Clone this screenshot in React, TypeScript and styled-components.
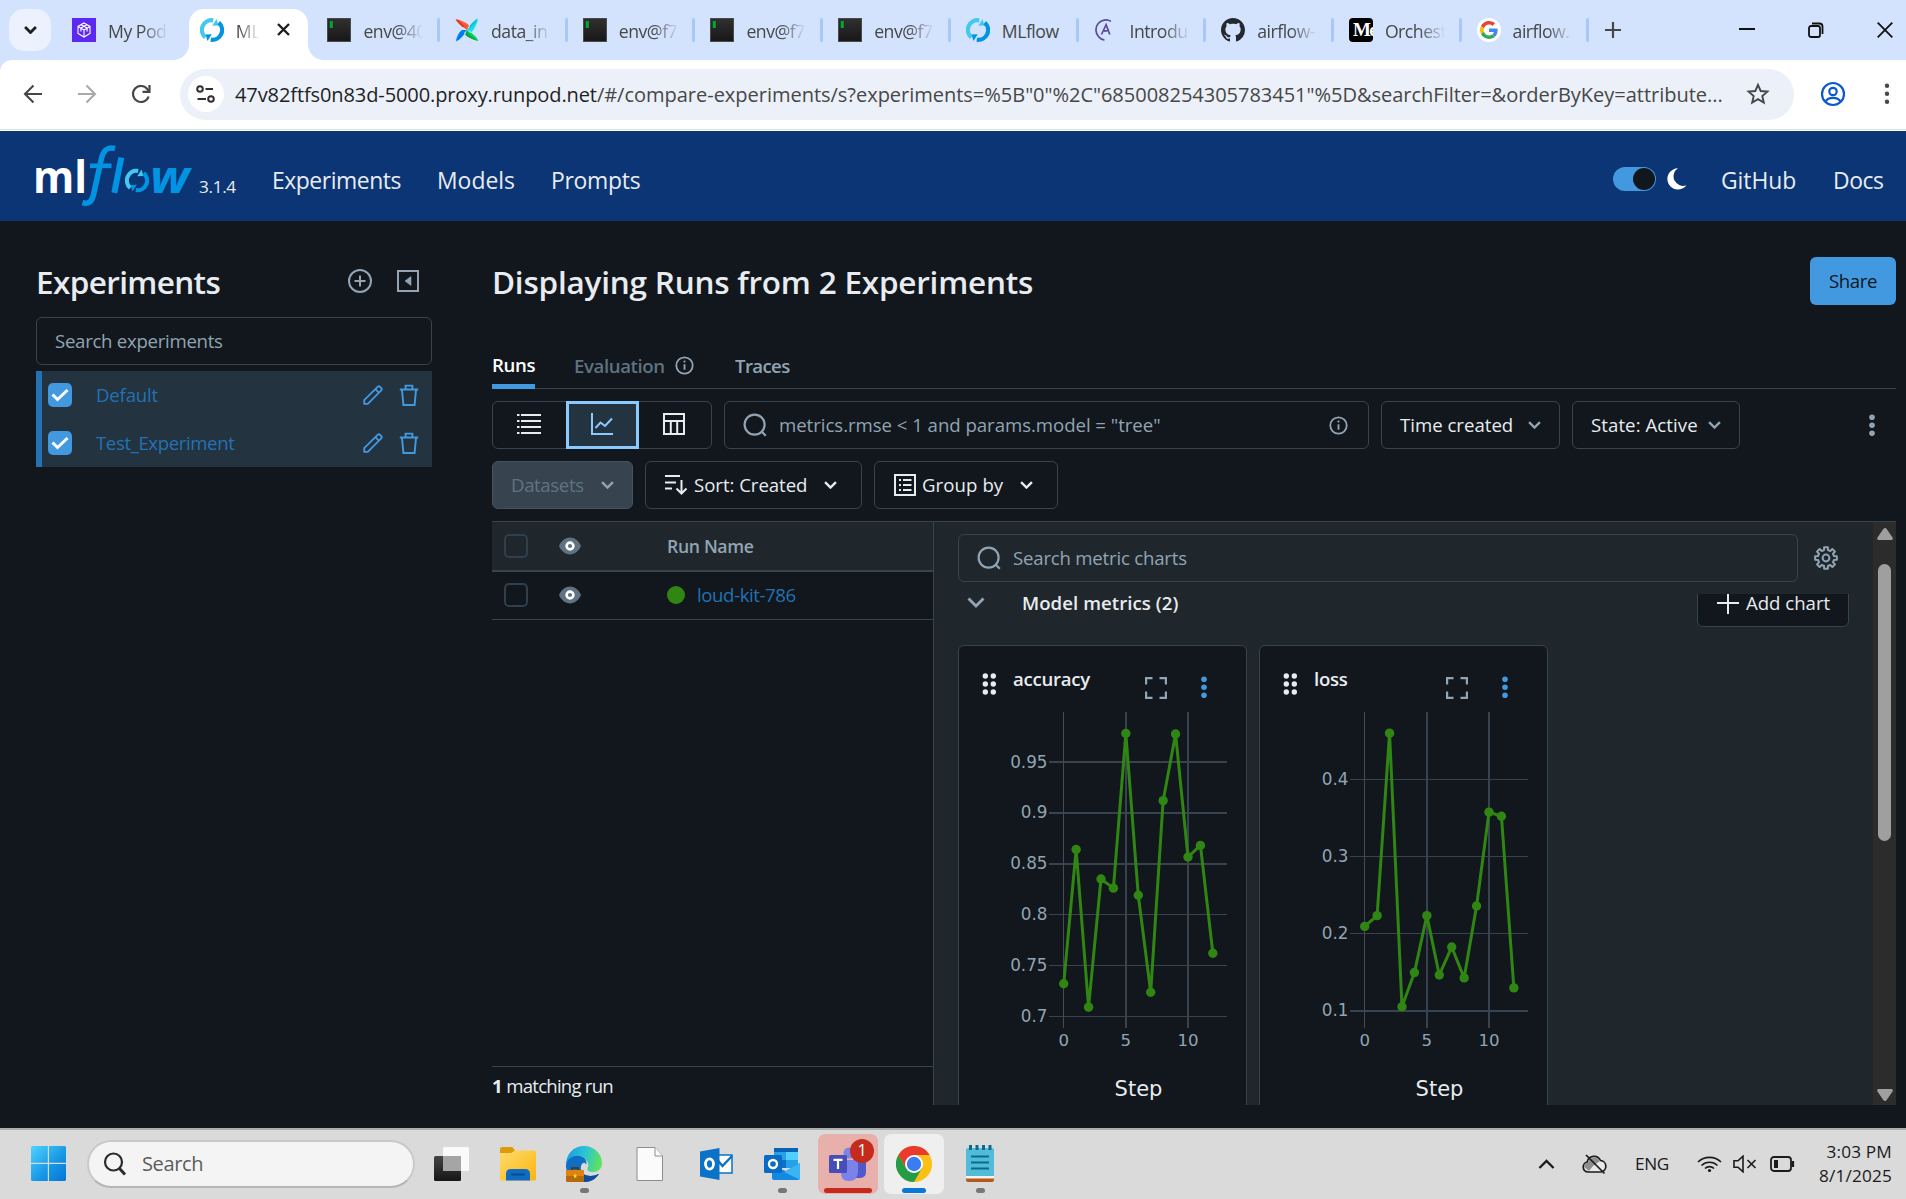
import React from "react";
import styled, { createGlobalStyle, css } from "styled-components";

const c = {
  bg: "#11171c",
  panel: "#1f272d",
  border: "#37444f",
  text: "#e8ecf0",
  muted: "#92a4b3",
  dim: "#5f7281",
  blue: "#4299e0",
  link: "#2272b4",
  nav: "#0b3574",
  green: "#308613",
};

const Global = createGlobalStyle`
  * { box-sizing: border-box; }
  body { margin: 0; background: ${c.bg}; font-family: "Open Sans", "Noto Sans", sans-serif; overflow: hidden; }
  svg { display: block; flex: none; }
`;

const Txt = styled.span<{ $s?: number; $w?: number; $c?: string; $ls?: number }>`
  font-size: ${(p) => (p.$s ?? 19.5) * 0.955}px;
  font-weight: ${(p) => p.$w ?? 400};
  color: ${(p) => p.$c ?? c.text};
  letter-spacing: ${(p) => p.$ls ?? -0.02}em;
  line-height: 1.3;
  padding-top: ${(p) => ((p.$s ?? 0) > 30 ? 0.1 : 0.06)}em;
  white-space: pre;
`;

const Screen = styled.div`
  width: 1906px;
  height: 1199px;
  display: flex;
  flex-direction: column;
  overflow: hidden;
  background: ${c.bg};
`;

/* ---------- browser chrome ---------- */
const TabStrip = styled.div`
  height: 60px;
  flex: none;
  display: flex;
  align-items: center;
  background: #d3e3fd;
  padding-left: 9px;
`;
const TabSearch = styled.div`
  width: 42px;
  height: 42px;
  margin-right: 4px;
  border-radius: 15px;
  background: #ebf2fe;
  display: grid;
  place-items: center;
`;
const Tab = styled.div<{ $active?: boolean; $sep?: boolean }>`
  width: 127.7px;
  height: 60px;
  flex: none;
  display: flex;
  align-items: center;
  padding-left: 17px;
  position: relative;
  z-index: ${(p) => (p.$active ? 1 : 0)};
  ${(p) =>
    p.$sep &&
    css`
      &::after {
        content: "";
        width: 3px;
        height: 24px;
        margin-left: auto;
        margin-right: -2px;
        border-radius: 2px;
        background: #a8c7fa;
      }
    `}
`;
const ActiveShape = styled.div`
  position: absolute;
  left: 6px;
  right: 2px;
  top: 9px;
  bottom: 0;
  background: #fff;
  border-radius: 15px 15px 0 0;
  &::before,
  &::after {
    content: "";
    position: absolute;
    bottom: 0;
    width: 15px;
    height: 15px;
  }
  &::before {
    left: -15px;
    background: radial-gradient(circle at 0 0, transparent 14.5px, #fff 15px);
  }
  &::after {
    right: -15px;
    background: radial-gradient(circle at 100% 0, transparent 14.5px, #fff 15px);
  }
`;
const TabBody = styled.div`
  display: flex;
  align-items: center;
  gap: 12px;
  position: relative;
`;
const TabTitle = styled.div<{ $width: number; $fade: boolean }>`
  width: ${(p) => p.$width}px;
  overflow: hidden;
  display: flex;
  padding-top: 2px;
  ${(p) =>
    p.$fade &&
    css`
      mask-image: linear-gradient(90deg, #000 calc(100% - 26px), transparent);
    `}
`;
const CloseBtn = styled.div`
  margin-left: 5px;
`;
const NewTab = styled.div`
  margin-left: 18px;
`;
const WindowControls = styled.div`
  margin-left: auto;
  margin-right: 13px;
  display: flex;
  align-items: center;
  gap: 53px;
`;
const AddressBar = styled.div`
  height: 71px;
  flex: none;
  background: #fff;
  border-bottom: 1px solid #fff;
  box-shadow: inset 0 -1px 0 #d7e3e0;
  border-top-left-radius: 12px;
  display: flex;
  align-items: center;
  padding: 0 0 2px 20px;
`;
const AddressWrap = styled.div`
  background: #d3e3fd;
`;
const NavIcons = styled.div`
  display: flex;
  gap: 28px;
  width: 160px;
`;
const Omnibox = styled.div`
  width: 1614px;
  height: 51px;
  border-radius: 26px;
  background: #ebf0f9;
  display: flex;
  align-items: center;
  padding: 0 24px 0 8px;
`;
const SiteInfo = styled.div`
  width: 36px;
  height: 36px;
  border-radius: 50%;
  background: #fff;
  margin-right: 11px;
  display: grid;
  place-items: center;
`;
const Push = styled.div`
  margin-left: auto;
  display: flex;
  align-items: center;
`;
const ChromeRight = styled.div`
  display: flex;
  align-items: center;
  gap: 37px;
  margin-left: 26px;
`;

/* ---------- mlflow header ---------- */
const Header = styled.div`
  height: 90px;
  flex: none;
  background: ${c.nav};
  display: flex;
  align-items: center;
  padding: 8px 22px 0 34px;
`;
const LogoBox = styled.div`
  margin-top: -9px;
`;
const Version = styled.div`
  display: flex;
  width: 78px;
  padding: 14px 0 0 5px;
`;
const NavLink = styled.div<{ $width: number }>`
  width: ${(p) => p.$width}px;
  display: flex;
`;
const Toggle = styled.div`
  width: 43px;
  height: 24px;
  border-radius: 12px;
  background: ${c.blue};
  display: flex;
  justify-content: flex-end;
  padding: 1px;
  margin: -2px 11px 0 0;
`;
const Knob = styled.div`
  width: 22px;
  height: 22px;
  border-radius: 50%;
  background: ${c.bg};
`;
const MoonBox = styled.div`
  margin: -2px 34px 0 0;
`;

/* ---------- page ---------- */
const Page = styled.div`
  height: 907px;
  flex: none;
  display: flex;
  padding: 36px 10px 23px 36px;
`;
const Sidebar = styled.div`
  width: 396px;
  margin-right: 60px;
  flex: none;
`;
const TitleRow = styled.div`
  height: 48px;
  display: flex;
  align-items: center;
  justify-content: space-between;
`;
const SideIcons = styled.div`
  display: flex;
  gap: 24px;
  padding-right: 12px;
`;
const Field = styled.div<{ $width: number; $pad?: number; $mt?: number }>`
  width: ${(p) => p.$width}px;
  height: 48px;
  flex: none;
  margin-top: ${(p) => p.$mt ?? 0}px;
  border: 1px solid ${c.border};
  border-radius: 6px;
  display: flex;
  align-items: center;
  gap: 12px;
  padding: 0 20px 0 ${(p) => p.$pad ?? 18}px;
`;
const ExpList = styled.div`
  margin-top: 6px;
  border-left: 6px solid ${c.link};
  background: #243340;
`;
const ExpRow = styled.div`
  height: 48px;
  display: flex;
  align-items: center;
  padding: 0 13px 0 6px;
`;
const Checked = styled.div`
  width: 24px;
  height: 24px;
  border-radius: 5px;
  background: ${c.blue};
  margin-right: 24px;
  display: grid;
  place-items: center;
`;
const RowActions = styled.div`
  margin-left: auto;
  display: flex;
  align-items: center;
  gap: 16px;
`;
const Main = styled.div`
  width: 1404px;
  display: flex;
  flex-direction: column;
`;
const ShareBtn = styled.div`
  width: 86px;
  height: 48px;
  border-radius: 6px;
  background: ${c.blue};
  display: grid;
  place-items: center;
`;
const SubTabs = styled.div`
  height: 48px;
  margin-top: 36px;
  border-bottom: 1px solid ${c.border};
  display: flex;
`;
const SubTab = styled.div<{ $active?: boolean; $width: number; $mr: number }>`
  width: ${(p) => p.$width}px;
  margin-right: ${(p) => p.$mr}px;
  height: 48px;
  display: flex;
  align-items: center;
  gap: 10px;
  padding-top: ${(p) => (p.$active ? 5 : 1)}px;
  border-bottom: ${(p) => (p.$active ? `5px solid ${c.blue}` : "none")};
`;
const Tools = styled.div`
  display: flex;
  gap: 12px;
  margin-top: 12px;
  height: 48px;
  flex: none;
`;
const Segments = styled.div`
  width: 220px;
  border: 1px solid ${c.border};
  border-radius: 6px;
  display: grid;
  grid-template-columns: 73px 73px 72px;
`;
const Segment = styled.div<{ $active?: boolean }>`
  display: grid;
  place-items: center;
  padding: 0 2px 3px 0;
  ${(p) =>
    p.$active &&
    css`
      margin: -1px 0;
      background: #243340;
      border: 3px solid #8acaff;
    `}
`;
const Btn = styled.div<{ $width: number; $disabled?: boolean; $pr?: number }>`
  width: ${(p) => p.$width}px;
  border: 1px solid ${(p) => (p.$disabled ? "#44535f" : c.border)};
  background: ${(p) => (p.$disabled ? c.border : "transparent")};
  border-radius: 6px;
  display: flex;
  align-items: center;
  padding: 0 ${(p) => p.$pr ?? 18}px 0 18px;
`;
const BtnIcon = styled.div`
  margin: 0 5px 0 1px;
`;
const Overflow = styled.div`
  margin-left: auto;
  padding-right: 20px;
  display: flex;
  align-items: center;
`;

/* ---------- runs table ---------- */
const Split = styled.div`
  display: flex;
  margin-top: 12px;
  height: 584px;
  border-top: 1px solid ${c.border};
`;
const RunsCol = styled.div`
  width: 441px;
  flex: none;
  display: flex;
  flex-direction: column;
`;
const TRow = styled.div<{ $head?: boolean }>`
  height: ${(p) => (p.$head ? 50 : 48)}px;
  background: ${(p) => (p.$head ? c.panel : "transparent")};
  border-bottom: ${(p) => (p.$head ? 2 : 1)}px solid ${c.border};
  display: flex;
  align-items: center;
  padding: 0 0 ${(p) => (p.$head ? 0 : 1)}px 12px;
`;
const Box = styled.div`
  width: 24px;
  height: 24px;
  border: 2px solid #2f3f4d;
  border-radius: 5px;
  margin-right: 31px;
`;
const EyeCell = styled.div`
  width: 109px;
`;
const Dot = styled.div`
  width: 18px;
  height: 18px;
  border-radius: 50%;
  background: ${c.green};
  margin-right: 12px;
`;
const RunCell = styled.div`
  display: flex;
  align-items: center;
  margin-left: -1px;
`;
const Footer = styled.div`
  margin-top: auto;
  height: 39px;
  border-top: 1px solid ${c.border};
  display: flex;
  align-items: center;
`;

/* ---------- charts ---------- */
const ChartsCol = styled.div`
  width: 940px;
  flex: none;
  border-left: 1px solid ${c.border};
  background: ${c.panel};
  padding: 12px 24px 0 24px;
  display: flex;
  flex-direction: column;
`;
const SearchRow = styled.div`
  display: flex;
  align-items: center;
  gap: 16px;
  margin-bottom: 12px;
`;
const Scroller = styled.div`
  flex: 1;
  min-height: 0;
  overflow: hidden;
`;
const Section = styled.div`
  margin-top: -15px;
  height: 48px;
  display: flex;
  align-items: center;
  padding-left: 9px;
`;
const SectionTitle = styled.div`
  margin-left: 37px;
  display: flex;
`;
const AddBtn = styled.div`
  margin-left: auto;
  width: 152px;
  height: 48px;
  background: ${c.bg};
  border: 1px solid ${c.border};
  border-radius: 6px;
  display: flex;
  align-items: center;
  gap: 7px;
  padding: 0 0 0 19px;
`;
const Cards = styled.div`
  display: flex;
  gap: 12px;
  margin-top: 18px;
`;
const Card = styled.div`
  width: 289px;
  height: 520px;
  flex: none;
  background: ${c.bg};
  border: 1px solid ${c.border};
  border-radius: 6px;
`;
const CardHead = styled.div`
  height: 56px;
  display: flex;
  align-items: center;
  padding: 20px 38px 0 23px;
`;
const CardTitle = styled.div`
  margin: -10px 0 0 16px;
  display: flex;
`;
const CardIcons = styled.div`
  margin-left: auto;
  display: flex;
  gap: 33px;
  padding-top: 7px;
  align-items: center;
`;
const Track = styled.div`
  width: 23px;
  flex: none;
  background: #2c2c2c;
  display: flex;
  flex-direction: column;
  align-items: center;
  padding: 6px 0 4px;
`;
const Thumb = styled.div`
  width: 13px;
  height: 277px;
  margin: 24px 0 auto;
  border-radius: 7px;
  background: #9f9f9f;
`;

/* ---------- taskbar ---------- */
const Taskbar = styled.div`
  height: 71px;
  flex: none;
  background: #dadada;
  border-top: 2px solid #adadad;
  display: flex;
  align-items: center;
  padding: 0 14px 2px 31px;
`;
const TaskSearch = styled.div`
  width: 328px;
  height: 48px;
  margin: 0 7px 0 21px;
  border-radius: 24px;
  border: 2px solid #c9c9c9;
  border-bottom-color: #b5b5b5;
  background: #f4f4f4;
  display: flex;
  align-items: center;
  gap: 15px;
  padding-left: 14px;
`;
const Slot = styled.div<{ $bg?: string }>`
  width: 60px;
  height: 60px;
  margin-right: 6px;
  flex: none;
  border-radius: 7px;
  background: ${(p) => p.$bg ?? "transparent"};
  display: grid;
  place-items: center;
  position: relative;
`;
const Indicator = styled.div<{ $width: number; $color: string }>`
  position: absolute;
  bottom: 1px;
  left: calc(50% - ${(p) => p.$width / 2}px);
  width: ${(p) => p.$width}px;
  height: 5px;
  border-radius: 3px;
  background: ${(p) => p.$color};
`;
const Badge = styled.div`
  position: absolute;
  right: 4px;
  top: 5px;
  width: 24px;
  height: 24px;
  border-radius: 50%;
  background: #c42b1c;
  display: grid;
  place-items: center;
`;
const Tray = styled.div`
  margin-left: auto;
  display: flex;
  align-items: center;
`;
const TrayItem = styled.div<{ $mr: number }>`
  margin-right: ${(p) => p.$mr}px;
  display: flex;
`;
const Clock = styled.div`
  width: 83px;
  display: flex;
  flex-direction: column;
  align-items: flex-end;
`;

/* ---------- icons ---------- */
const Chevron = ({ size = 12, color = c.text, sw = 2.2, up = false }: { size?: number; color?: string; sw?: number; up?: boolean }) => (
  <svg width={size} height={size * 0.67} viewBox="0 0 12 8" fill="none" stroke={color} strokeWidth={sw}>
    <path d={up ? "M1 7l5-5 5 5" : "M1 1l5 5 5-5"} />
  </svg>
);
const Dots = ({ color, r = 2.5, gap = 8 }: { color: string; r?: number; gap?: number }) => (
  <svg width="8" height={gap * 2 + r * 2 + 1} viewBox={`0 0 8 ${gap * 2 + r * 2 + 1}`} fill={color}>
    {[0, 1, 2].map((i) => (
      <circle key={i} cx="4" cy={r + 0.5 + i * gap} r={r} />
    ))}
  </svg>
);
const Magnifier = ({ size = 24, color = c.muted }: { size?: number; color?: string }) => (
  <svg width={size} height={size} viewBox="0 0 24 24" fill="none" stroke={color} strokeWidth="2.2">
    <circle cx="11.6" cy="11.6" r="10" />
    <path d="M18.5 18.5l4.3 4.3" />
  </svg>
);
const Info = () => (
  <svg width="19" height="19" viewBox="0 0 19 19">
    <circle cx="9.5" cy="9.5" r="8.2" fill="none" stroke={c.muted} strokeWidth="1.8" />
    <circle cx="9.5" cy="5.6" r="1.1" fill={c.muted} />
    <path d="M9.5 8.3v5.4" stroke={c.muted} strokeWidth="1.9" />
  </svg>
);
const MlflowMark = ({ size = 24 }: { size?: number }) => (
  <svg width={size} height={size} viewBox="0 0 24 24" fill="none" strokeWidth="4.2">
    <path d="M5.300 19.400A9.800 9.800 0 0 1 13.200 2.300" stroke="#43c9ed" />
    <path d="M12.200 7.700L18.400 7.500 16.600.9z" fill="#43c9ed" />
    <path d="M18.700 4.600A9.800 9.800 0 0 1 10.800 21.700" stroke="#0194e2" />
    <path d="M11.800 16.300L5.600 16.500 7.400 23.100z" fill="#0194e2" />
  </svg>
);
const Terminal = () => (
  <svg width="24" height="24" viewBox="0 0 24 24">
    <defs>
      <linearGradient id="term" x1="0" y1="0" x2="0" y2="1">
        <stop offset="0" stopColor="#303030" />
        <stop offset="1" stopColor="#171717" />
      </linearGradient>
    </defs>
    <rect x="0.5" y="0.5" width="23" height="23" fill="url(#term)" stroke="#4a4a4a" />
    <rect x="2.8" y="3" width="3" height="7" fill="#00a832" />
  </svg>
);
const RunpodIcon = () => (
  <svg width="24" height="24" viewBox="0 0 24 24" fill="none" stroke="#fff" strokeWidth="1.1">
    <rect width="24" height="24" fill="#5d29f0" stroke="none" />
    <path d="M12 5l6 3.400v7L12 19l-6-3.600v-7zM6 8.400l6 3.500 6-3.500M12 12v7M8.900 10l6-3.300M15.100 10l-6-3.300M8.900 13.500v-3.400M15.100 13.500v-3.400" />
  </svg>
);
const Airflow = () => (
  <svg width="24" height="24" viewBox="0 0 24 24">
    <path d="M.5 1.300C6 1.800 9.500 5 12 12 9.600 10 9 8.500 8 9.500 5 7 2 4.500.5 1.300z" fill="#e43921" />
    <path d="M1 1C7 3 11 4 14 7.500L12 12C9 7 6 4 1 1z" fill="#ff5a36" />
    <path d="M22.700.5C22.200 6 19 9.500 12 12c2-2.400 3.500-3 2.500-4C17 5 19.500 2 22.700.5z" fill="#00c7d4" />
    <path d="M23 1C21 7 20 11 16.500 14L12 12C17 9 20 6 23 1z" fill="#11e1ee" />
    <path d="M23.500 22.700C18 22.200 14.500 19 12 12c2.400 2 3 3.500 4 2.500 3 2.500 6 5 7.500 8.200z" fill="#04d659" />
    <path d="M23 23C17 21 13 20 10 16.500L12 12c3 5 6 8 11 11z" fill="#00ad46" />
    <path d="M1.300 23.500C1.800 18 5 14.500 12 12c-2 2.400-3.500 3-2.500 4C7 19 4.500 22 1.300 23.500z" fill="#017cee" />
    <path d="M1 23C2.500 17 4 14 7.200 12L12 12C7 14 4 18 1 23z" fill="#017cee" />
  </svg>
);
const Astronomer = () => (
  <svg width="24" height="24" viewBox="0 0 24 24" fill="none" stroke="#5c4a9c" strokeWidth="1.7">
    <path d="M17 3.400A9.900 9.900 0 0 0 4.500 18.500Q7 21.800 10.500 22" />
    <path d="M7.500 16.500l4.600-9.800 3.700 9.800M9.800 13.200l5.200-.8" />
  </svg>
);
const GitHubIcon = () => (
  <svg width="24" height="24" viewBox="0 0 16 16" fill="#24292f">
    <path d="M8 0C3.580 0 0 3.580 0 8c0 3.540 2.290 6.530 5.470 7.590.4.070.550-.170.550-.380 0-.190-.010-.820-.010-1.490-2.010.370-2.530-.490-2.690-.940-.090-.230-.480-.940-.820-1.130-.280-.150-.680-.520-.010-.530.630-.010 1.080.580 1.230.820.720 1.210 1.870.870 2.330.660.070-.520.280-.870.510-1.070-1.780-.200-3.640-.890-3.640-3.950 0-.870.310-1.590.820-2.150-.080-.200-.360-1.020.080-2.120 0 0 .670-.210 2.200.820.640-.180 1.320-.270 2-.270s1.360.090 2 .270c1.530-1.040 2.200-.820 2.200-.820.440 1.100.160 1.920.080 2.120.510.560.820 1.270.820 2.150 0 3.070-1.870 3.750-3.650 3.950.290.250.540.730.540 1.480 0 1.070-.010 1.930-.010 2.200 0 .210.150.460.550.380A8 8 0 0 0 16 8c0-4.420-3.580-8-8-8z" />
  </svg>
);
const MediumBox = styled.div`
  width: 24px;
  height: 24px;
  border-radius: 4px;
  background: #000;
  color: #fff;
  overflow: hidden;
  white-space: nowrap;
  padding-left: 4px;
  font: bold 19px/23px "Liberation Serif", serif;
  letter-spacing: -1.5px;
`;
const GoogleG = () => (
  <svg width="24" height="24" viewBox="0 0 24 24">
    <circle cx="12" cy="12" r="12" fill="#fff" />
    <g transform="translate(3 3) scale(.375)">
      <path fill="#EA4335" d="M24 9.500c3.540 0 6.710 1.220 9.210 3.600l6.850-6.850C35.900 2.380 30.470 0 24 0 14.620 0 6.510 5.380 2.560 13.220l7.980 6.190C12.430 13.720 17.740 9.500 24 9.500z" />
      <path fill="#4285F4" d="M46.980 24.550c0-1.570-.15-3.090-.38-4.550H24v9.020h12.940c-.58 2.960-2.260 5.480-4.780 7.180l7.730 6c4.510-4.180 7.090-10.360 7.090-17.650z" />
      <path fill="#FBBC05" d="M10.530 28.590c-.48-1.450-.76-2.990-.76-4.590s.27-3.140.76-4.590l-7.980-6.190C.92 16.460 0 20.120 0 24c0 3.880.92 7.540 2.560 10.780l7.970-6.190z" />
      <path fill="#34A853" d="M24 48c6.480 0 11.930-2.130 15.890-5.810l-7.730-6c-2.150 1.450-4.920 2.300-8.160 2.300-6.260 0-11.570-4.220-13.470-9.910l-7.980 6.190C6.510 42.620 14.620 48 24 48z" />
    </g>
  </svg>
);

const Logo = () => (
  <svg width="160" height="64" viewBox="34 144 160 64">
    <text x="33" y="192.500" fontFamily="Open Sans" fontWeight="700" fontSize="45" fill="#fff" textLength="54" lengthAdjust="spacingAndGlyphs">
      ml
    </text>
    <path d="M115 148.500c-8-2-12 2-14 12l-7 32c-1.600 8.500-4.500 12-11.500 10.300" fill="none" stroke="#0194e2" strokeWidth="5.600" />
    <path d="M90 165.800h21.500" stroke="#0194e2" strokeWidth="4.600" />
    <path d="M121.300 157.500l-7 35.300" stroke="#0194e2" strokeWidth="6" />
    <g transform="translate(125 168.500)">
      <MlflowMark size={24} />
    </g>
    <text x="150" y="192.700" fontFamily="Open Sans" fontStyle="italic" fontWeight="700" fontSize="44" fill="#0194e2" textLength="39.500" lengthAdjust="spacingAndGlyphs">
      w
    </text>
  </svg>
);
const Pencil = () => (
  <svg width="20" height="20" viewBox="0 0 20 20" fill="none" stroke={c.blue} strokeWidth="1.800" strokeLinejoin="round">
    <path d="M1.200 18.800v-3.600L14.600 1.800a1.700 1.700 0 0 1 2.400 0l1.200 1.200a1.700 1.700 0 0 1 0 2.400L4.800 18.800zM12.300 4.200l3.500 3.500" />
  </svg>
);
const Trash = () => (
  <svg width="20" height="22" viewBox="0 0 20 22" fill="none" stroke={c.blue} strokeWidth="1.900">
    <path d="M.8 5.500h18.400M6.600 5V1.600h6.800V5M3 5.800l1.400 15.200h11.200L17 5.800" />
  </svg>
);
const Eye = () => (
  <svg width="22" height="18" viewBox="0 0 22 18">
    <path d="M0 9C2.500 3.500 6.500.6 11 .6S19.500 3.500 22 9c-2.500 5.500-6.500 8.400-11 8.400S2.500 14.500 0 9z" fill={c.dim} />
    <circle cx="11" cy="9" r="3.400" fill="none" stroke="#fff" strokeWidth="2.600" />
  </svg>
);
const Gear = () => (
  <svg width="24" height="24" viewBox="0 0 24 24" fill="none" stroke={c.muted} strokeWidth="2">
    <path
      strokeLinejoin="round"
      d={(() => {
        const pts: string[] = [];
        for (let i = 0; i < 8; i++) {
          const a = (i * Math.PI) / 4 - Math.PI / 2;
          [
            [-0.24, 8.2],
            [-0.17, 11],
            [0.17, 11],
            [0.24, 8.2],
          ].forEach(([o, r]) => pts.push(`${(12 + r * Math.cos(a + o)).toFixed(2)} ${(12 + r * Math.sin(a + o)).toFixed(2)}`));
        }
        return "M" + pts.join("L") + "Z";
      })()}
    />
    <circle cx="12" cy="12" r="3.400" />
  </svg>
);
const Fullscreen = () => (
  <svg width="22" height="22" viewBox="0 0 22 22" fill="none" stroke={c.muted} strokeWidth="2.200">
    <path d="M1.100 7.500V1.100h6.400M14.500 1.100h6.400v6.400M20.900 14.500v6.400h-6.400M7.500 20.900H1.100v-6.400" />
  </svg>
);
const DragHandle = () => (
  <svg width="15" height="22" viewBox="0 0 15 22" fill={c.text}>
    {[3, 11, 19].map((y) => (
      <g key={y}>
        <circle cx="3.300" cy={y} r="2.700" />
        <circle cx="11.300" cy={y} r="2.700" />
      </g>
    ))}
  </svg>
);

type ChartProps = { title: string; values: number[]; ticks: { v: number; w: number }[]; y: (v: number) => number };
const PLOT = { x0: 104.7, step: 12.43, left: 90, right: 268, top: 10, bottom: 325.7 };
const ChartCard = ({ title, values, ticks, y }: ChartProps) => {
  const x = (i: number) => PLOT.x0 + i * PLOT.step;
  return (
    <Card>
      <CardHead>
        <DragHandle />
        <CardTitle>
          <Txt $w={600} $ls={-0.015}>{title}</Txt>
        </CardTitle>
        <CardIcons>
          <Fullscreen />
          <Dots color={c.blue} r={2.8} />
        </CardIcons>
      </CardHead>
      <svg width="287" height="440" viewBox="0 0 287 440" fontFamily="DejaVu Sans" fill={c.muted}>
        <g stroke={c.border} shapeRendering="crispEdges">
          {ticks.map((t) => (
            <line key={t.v} x1={PLOT.left} x2={PLOT.right} y1={y(t.v)} y2={y(t.v)} strokeWidth={t.w} />
          ))}
          <line x1={x(5)} x2={x(5)} y1={PLOT.top} y2={PLOT.bottom} strokeWidth="2" />
          <line x1={x(10)} x2={x(10)} y1={PLOT.top} y2={PLOT.bottom} strokeWidth="2" />
          <line x1={x(0)} x2={x(0)} y1={PLOT.top} y2={PLOT.bottom} strokeWidth="1" stroke="#444a50" />
        </g>
        {ticks.map((t) => (
          <text key={t.v} x={PLOT.left - 1.5} y={y(t.v) + 5.6} textAnchor="end" fontSize="16.800">
            {t.v}
          </text>
        ))}
        {[0, 5, 10].map((i) => (
          <text key={i} x={x(i)} y={344} textAnchor="middle" fontSize="16.600">
            {i}
          </text>
        ))}
        <text x="179.500" y="394" textAnchor="middle" fontSize="21" fill={c.text}>
          Step
        </text>
        <polyline points={values.map((v, i) => `${x(i)},${y(v)}`).join(" ")} fill="none" stroke={c.green} strokeWidth="3" strokeLinejoin="round" />
        {values.map((v, i) => (
          <circle key={i} cx={x(i)} cy={y(v)} r="4.700" fill={c.green} />
        ))}
      </svg>
    </Card>
  );
};

const accuracy = [0.732, 0.864, 0.709, 0.835, 0.826, 0.978, 0.819, 0.7237, 0.912, 0.9775, 0.8566, 0.868, 0.762];
const loss = [0.2095, 0.2234, 0.4601, 0.1052, 0.1496, 0.2234, 0.1465, 0.1827, 0.1427, 0.2359, 0.3576, 0.3524, 0.1297];

const TABS: { icon: React.ReactNode; title: string; sep: boolean; active?: boolean; whole?: boolean }[] = [
  { icon: <RunpodIcon />, title: "My Pod", sep: false },
  { icon: <MlflowMark />, title: "ML", sep: false, active: true },
  { icon: <Terminal />, title: "env@40", sep: true },
  { icon: <Airflow />, title: "data_in", sep: true },
  { icon: <Terminal />, title: "env@f7", sep: true },
  { icon: <Terminal />, title: "env@f7", sep: true },
  { icon: <Terminal />, title: "env@f7", sep: true },
  { icon: <MlflowMark />, title: "MLflow", sep: true, whole: true },
  { icon: <Astronomer />, title: "Introdu", sep: true },
  { icon: <GitHubIcon />, title: "airflow-", sep: true },
  { icon: <MediumBox>Me</MediumBox>, title: "Orchest", sep: true },
  { icon: <GoogleG />, title: "airflow.", sep: true },
];

export default function App() {
  return (
    <>
      <Global />
      <Screen>
        <TabStrip>
          <TabSearch>
            <Chevron size={13} color="#1f1f1f" sw={2.6} />
          </TabSearch>
          {TABS.map((t, i) => (
            <Tab key={i} $active={t.active} $sep={t.sep}>
              {t.active && <ActiveShape />}
              <TabBody>
                {t.icon}
                <TabTitle $width={t.active ? 24 : 60} $fade={!t.whole}>
                  <Txt $s={18.5} $ls={t.active ? 0 : -0.028} $c={t.active ? "#1f1f1f" : "#474747"}>{t.title}</Txt>
                </TabTitle>
                {t.active && (
                  <CloseBtn>
                    <svg width="13" height="13" viewBox="0 0 13 13" stroke="#1f1f1f" strokeWidth="2.400">
                      <path d="M1 1l11 11M12 1L1 12" />
                    </svg>
                  </CloseBtn>
                )}
              </TabBody>
            </Tab>
          ))}
          <NewTab>
            <svg width="16" height="16" viewBox="0 0 16 16" stroke="#474747" strokeWidth="2.200">
              <path d="M8 0v16M0 8h16" />
            </svg>
          </NewTab>
          <WindowControls>
            <svg width="16" height="16" viewBox="0 0 16 16" stroke="#111" strokeWidth="2">
              <path d="M0 7h16" />
            </svg>
            <svg width="16" height="16" viewBox="0 0 16 16" stroke="#111" strokeWidth="1.800" fill="none">
              <rect x="1" y="4" width="11" height="11" rx="2" />
              <path d="M4 1.500h7.500a3 3 0 0 1 3 3V12" />
            </svg>
            <svg width="16" height="16" viewBox="0 0 16 16" stroke="#111" strokeWidth="1.800">
              <path d="M.7.7l14.600 14.600M15.300.7L.7 15.300" />
            </svg>
          </WindowControls>
        </TabStrip>

        <AddressWrap>
          <AddressBar>
            <NavIcons>
              <svg width="26" height="24" viewBox="0 0 26 24" fill="none" stroke="#474747" strokeWidth="2.100">
                <path d="M22 12H5.500M13.500 3.500L5 12l8.500 8.500" />
              </svg>
              <svg width="26" height="24" viewBox="0 0 26 24" fill="none" stroke="#a9a9a9" strokeWidth="2.100">
                <path d="M4 12h16.500M12.500 3.500L21 12l-8.500 8.500" />
              </svg>
              <svg width="26" height="24" viewBox="0 0 26 24" fill="none" stroke="#474747" strokeWidth="2.200">
                <path d="M20.600 14.500A8 8 0 1 1 19.500 7.300l1.500 2" />
                <path d="M21.500 3v6.800h-7" />
              </svg>
            </NavIcons>
            <Omnibox>
              <SiteInfo>
                <svg width="20" height="18" viewBox="0 0 20 18" fill="none" stroke="#303030" strokeWidth="2">
                  <circle cx="4" cy="4" r="2.800" />
                  <path d="M9.500 4H17M1.500 14H10" />
                  <circle cx="15" cy="14" r="2.800" />
                </svg>
              </SiteInfo>
              <Txt $s={21} $ls={-0.006} $c="#1f1f1f">47v82ftfs0n83d-5000.proxy.runpod.net</Txt>
              <Txt $s={21} $ls={-0.002} $c="#474747">{'/#/compare-experiments/s?experiments=%5B"0"%2C"685008254305783451"%5D&searchFilter=&orderByKey=attribute...'}</Txt>
              <Push>
                <svg width="24" height="24" viewBox="0 0 24 24" fill="none" stroke="#474747" strokeWidth="1.900">
                  <path d="M12 2.800l2.700 6.200 6.700.6-5.100 4.400 1.500 6.600L12 17.100l-5.800 3.500 1.500-6.600L2.600 9.600 9.300 9z" />
                </svg>
              </Push>
            </Omnibox>
            <ChromeRight>
              <svg width="26" height="26" viewBox="0 0 26 26" fill="none" stroke="#0b57d0" strokeWidth="2.200">
                <circle cx="13" cy="13" r="11" />
                <circle cx="13" cy="10.500" r="3.700" />
                <path d="M5.500 20.500c1.500-2.700 4-3.700 7.500-3.700s6 1 7.500 3.700" />
              </svg>
              <Dots color="#474747" r={2.2} />
            </ChromeRight>
          </AddressBar>
        </AddressWrap>

        <Header>
          <LogoBox><Logo /></LogoBox>
          <Version>
            <Txt $s={18}>3.1.4</Txt>
          </Version>
          <NavLink $width={165}><Txt $s={24}>Experiments</Txt></NavLink>
          <NavLink $width={114}><Txt $s={24} $ls={0}>Models</Txt></NavLink>
          <NavLink $width={100}><Txt $s={24} $ls={-0.012}>Prompts</Txt></NavLink>
          <Push>
            <Toggle><Knob /></Toggle>
            <MoonBox>
              <svg width="20" height="22" viewBox="0 0 20 22" fill="#fff">
                <path d="M11 .3A10.600 10.600 0 1 0 19.500 17.200 9.500 9.500 0 0 1 11 .3z" />
              </svg>
            </MoonBox>
            <NavLink $width={112}><Txt $s={24} $ls={-0.002}>GitHub</Txt></NavLink>
            <NavLink $width={51}><Txt $s={24}>Docs</Txt></NavLink>
          </Push>
        </Header>

        <Page>
          <Sidebar>
            <TitleRow>
              <Txt $s={33} $w={600} $ls={-0.02}>Experiments</Txt>
              <SideIcons>
                <svg width="24" height="24" viewBox="0 0 24 24" fill="none" stroke={c.muted} strokeWidth="2">
                  <circle cx="12" cy="12" r="11" />
                  <path d="M12 6.500v11M6.500 12h11" />
                </svg>
                <svg width="24" height="24" viewBox="0 0 24 24" fill="none" stroke={c.muted} strokeWidth="2">
                  <rect x="2" y="2" width="20" height="20" />
                  <path d="M15 7.500v9L9 12z" fill={c.muted} stroke={c.muted} strokeWidth="0.600" />
                </svg>
              </SideIcons>
            </TitleRow>
            <Field $width={396} $mt={12}>
              <Txt $c={c.muted} $ls={-0.015}>Search experiments</Txt>
            </Field>
            <ExpList>
              {["Default", "Test_Experiment"].map((n) => (
                <ExpRow key={n}>
                  <Checked>
                    <svg width="18" height="14" viewBox="0 0 18 14" fill="none" stroke="#fff" strokeWidth="3">
                      <path d="M1.500 6.500l5 5L16.500 2" />
                    </svg>
                  </Checked>
                  <Txt $c={c.link} $ls={n === "Default" ? -0.01 : -0.021}>{n}</Txt>
                  <RowActions>
                    <Pencil />
                    <Trash />
                  </RowActions>
                </ExpRow>
              ))}
            </ExpList>
          </Sidebar>

          <Main>
            <TitleRow>
              <Txt $s={33} $w={600} $ls={-0.007}>Displaying Runs from 2 Experiments</Txt>
              <ShareBtn><Txt $c={c.bg}>Share</Txt></ShareBtn>
            </TitleRow>
            <SubTabs>
              <SubTab $active $width={43} $mr={39}><Txt $w={600} $c="#fff">Runs</Txt></SubTab>
              <SubTab $width={120} $mr={41}>
                <Txt $w={600} $c={c.dim} $ls={-0.021}>Evaluation</Txt>
                <Info />
              </SubTab>
              <SubTab $width={60} $mr={0}><Txt $w={600} $c={c.muted} $ls={-0.034}>Traces</Txt></SubTab>
            </SubTabs>
            <Tools>
              <Segments>
                <Segment>
                  <svg width="24" height="20" viewBox="0 0 24 20" stroke={c.text} strokeWidth="2">
                    <path d="M0 1h2.500M4 1h20M0 7h2.500M4 7h20M0 13h2.500M4 13h20M0 19h2.500M4 19h20" />
                  </svg>
                </Segment>
                <Segment $active>
                  <svg width="22" height="22" viewBox="0 0 22 22" fill="none" stroke="#8acaff" strokeWidth="2">
                    <path d="M1 0v21h21M4.500 15l5-5.500 4.500 3.500 7-7.500" />
                  </svg>
                </Segment>
                <Segment>
                  <svg width="22" height="22" viewBox="0 0 22 22" fill="none" stroke={c.text} strokeWidth="2">
                    <path d="M1 1h20v20H1zM1 8h20M7.800 8V21M14.200 8V21" />
                  </svg>
                </Segment>
              </Segments>
              <Field $width={645} $pad={18}>
                <Magnifier />
                <Txt $c={c.muted} $ls={-0.002}>{'metrics.rmse < 1 and params.model = "tree"'}</Txt>
                <Push><Info /></Push>
              </Field>
              <Btn $width={179}><Txt $ls={0}>Time created</Txt><Push><Chevron size={13} color={c.muted} /></Push></Btn>
              <Btn $width={168}><Txt $ls={0.004}>State: Active</Txt><Push><Chevron size={13} color={c.muted} /></Push></Btn>
              <Overflow><Dots color={c.muted} r={2.8} /></Overflow>
            </Tools>
            <Tools>
              <Btn $width={141} $disabled><Txt $c={c.dim}>Datasets</Txt><Push><Chevron size={13} color={c.muted} /></Push></Btn>
              <Btn $width={217} $pr={24}>
                <BtnIcon>
                  <svg width="24" height="22" viewBox="0 0 24 22" fill="none" stroke={c.text} strokeWidth="2">
                    <path d="M0 2h15M0 8.500h11M0 14.500h7M16.500 6v13M11.500 14.500l5 5 5-5" />
                  </svg>
                </BtnIcon>
                <Txt $ls={-0.002}>Sort: Created</Txt>
                <Push><Chevron size={13} /></Push>
              </Btn>
              <Btn $width={184} $pr={24}>
                <BtnIcon>
                  <svg width="23" height="22" viewBox="0 0 23 22" fill="none" stroke={c.text} strokeWidth="2">
                    <path d="M1 1h20v20H1zM5 6h2M9 6h8.500M5 11h2M9 11h8.500M5 16h2M9 16h8.500" />
                  </svg>
                </BtnIcon>
                <Txt $ls={0.004}>Group by</Txt>
                <Push><Chevron size={13} /></Push>
              </Btn>
            </Tools>

            <Split>
              <RunsCol>
                <TRow $head>
                  <Box />
                  <EyeCell><Eye /></EyeCell>
                  <RunCell><Txt $s={18.5} $w={600} $c={c.muted}>Run Name</Txt></RunCell>
                </TRow>
                <TRow>
                  <Box />
                  <EyeCell><Eye /></EyeCell>
                  <RunCell><Dot /><Txt $c={c.link} $ls={-0.022}>loud-kit-786</Txt></RunCell>
                </TRow>
                <Footer>
                  <Txt $w={700}>1</Txt>
                  <Txt $ls={-0.042}> matching run</Txt>
                </Footer>
              </RunsCol>
              <ChartsCol>
                <SearchRow>
                  <Field $width={840} $pad={18}>
                    <Magnifier />
                    <Txt $c={c.muted} $ls={-0.011}>Search metric charts</Txt>
                  </Field>
                  <Gear />
                </SearchRow>
                <Scroller>
                  <Section>
                    <Chevron size={18} color={c.muted} sw={1.9} />
                    <SectionTitle><Txt $w={600} $ls={0.003}>Model metrics (2)</Txt></SectionTitle>
                    <AddBtn>
                      <svg width="22" height="22" viewBox="0 0 22 22" stroke={c.text} strokeWidth="2">
                        <path d="M11 0v22M0 11h22" />
                      </svg>
                      <Txt $ls={-0.001}>Add chart</Txt>
                    </AddBtn>
                  </Section>
                  <Cards>
                    <ChartCard
                      title="accuracy"
                      values={accuracy}
                      y={(v) => 60 + (0.95 - v) * 1017.4}
                      ticks={[{ v: 0.95, w: 2 }, { v: 0.9, w: 2 }, { v: 0.85, w: 2 }, { v: 0.8, w: 1 }, { v: 0.75, w: 1 }, { v: 0.7, w: 1 }]}
                    />
                    <ChartCard
                      title="loss"
                      values={loss}
                      y={(v) => 77.5 + (0.4 - v) * 771}
                      ticks={[{ v: 0.4, w: 1 }, { v: 0.3, w: 1 }, { v: 0.2, w: 1 }, { v: 0.1, w: 2 }]}
                    />
                  </Cards>
                </Scroller>
              </ChartsCol>
              <Track>
                <svg width="16" height="12" viewBox="0 0 16 12" fill="#9f9f9f"><path d="M8 0q1 0 1.700 1L15.500 9.500q1 2-1 2.500h-13q-2-.5-1-2.500L6.300 1Q7 0 8 0z" /></svg>
                <Thumb />
                <svg width="16" height="12" viewBox="0 0 16 12" fill="#9f9f9f"><path d="M8 12q1 0 1.700-1L15.500 2.500q1-2-1-2.500h-13q-2 .5-1 2.500L6.300 11q.7 1 1.700 1z" /></svg>
              </Track>
            </Split>
          </Main>
        </Page>

        <Taskbar>
          <svg width="35" height="35" viewBox="0 0 35 35">
            <defs>
              <linearGradient id="win" x1="0" y1="0" x2="1" y2="1">
                <stop offset="0" stopColor="#4fd3ff" />
                <stop offset=".6" stopColor="#1594e4" />
                <stop offset="1" stopColor="#0377d6" />
              </linearGradient>
            </defs>
            <path fill="url(#win)" d="M1 0h15.800v16.800H0V1zM18 0h16l1 1v15.800H18zM0 18h16.800v17H1l-1-1zM18 18h17v16l-1 1H18z" />
          </svg>
          <TaskSearch>
            <svg width="24" height="24" viewBox="0 0 24 24" fill="none" stroke="#2b2b2b">
              <circle cx="10.500" cy="10" r="8.500" strokeWidth="2.200" />
              <path d="M16.500 16.500l5.500 6" strokeWidth="3" />
            </svg>
            <Txt $s={21} $c="#5c5c5c">Search</Txt>
          </TaskSearch>

          <Slot>
            <svg width="36" height="36" viewBox="0 0 36 36">
              <defs>
                <linearGradient id="tv" x1="0" y1="0" x2="0" y2="1">
                  <stop offset="0" stopColor="#444" />
                  <stop offset="1" stopColor="#161616" />
                </linearGradient>
              </defs>
              <rect x="0" y="10" width="27" height="25" rx="1.500" fill="url(#tv)" />
              <rect x="9" y="1" width="26" height="24" rx="1.500" fill="#fafafa" />
              <path d="M9 10h18v15H9z" fill="#a5a5a5" />
            </svg>
          </Slot>
          <Slot>
            <svg width="36" height="34" viewBox="0 0 36 34">
              <defs>
                <linearGradient id="fold" x1="0" y1="0" x2="1" y2="1">
                  <stop offset="0" stopColor="#ffdc6e" />
                  <stop offset="1" stopColor="#fbb40d" />
                </linearGradient>
              </defs>
              <path d="M0 2q0-2 2-2h9q2 0 3 2l1 2v5H0z" fill="#dd9a0a" />
              <path d="M0 6h11l4-2.500h19q2 0 2 2V32q0 1.500-2 1.500H2q-2 0-2-1.500z" fill="url(#fold)" />
              <path d="M6 33.500V27q0-5 5-5h14q5 0 5 5v6.500z" fill="#0f6cc0" />
              <path d="M11 27.500h14" stroke="#084a94" strokeWidth="2" />
            </svg>
          </Slot>
          <Slot>
            <svg width="36" height="36" viewBox="0 0 36 36">
              <defs>
                <linearGradient id="edge" x1="0" y1=".3" x2="1" y2=".5">
                  <stop offset="0" stopColor="#1b9de2" />
                  <stop offset=".5" stopColor="#2bc4d4" />
                  <stop offset="1" stopColor="#62e35a" />
                </linearGradient>
              </defs>
              <path d="M18 0C28.500 0 36 8 36 17c0 6-4 9-9 9-4 0-6-1.500-5.500-3.500C25 15 17 10 9 11.500 4 12.500 1 15 0 19 0 8 7.500 0 18 0z" fill="url(#edge)" />
              <path d="M0 19c1-7 9-11 15-8.500 4 1.500 6.500 5 5 8-2-4-6 0-5 5 1.500 7 10 8 18 4.500C29.500 33 25 36 18 36 7 36-.5 28 0 19z" fill="#0f6fc4" />
              <path d="M15 23.500c1.500 7 10 8 18 4.500C29.500 33 25 36 18 36z" fill="#0f4d9a" />
              <rect x="0" y="24" width="18" height="12" rx="1.500" fill="#b8690a" />
              <path d="M0 25.500Q0 24 1.500 24h15q1.500 0 1.500 1.500V30H0z" fill="#dc8310" />
              <path d="M6 24v-2h6v2" fill="none" stroke="#5c3000" strokeWidth="1.600" />
              <rect x="8" y="28.500" width="2.400" height="3" fill="#ffd54a" />
            </svg>
            <Indicator $width={9} $color="#777" />
          </Slot>
          <Slot>
            <svg width="28" height="34" viewBox="0 0 28 34" fill="#fbfbfb" stroke="#8e8e8e">
              <path d="M1 .5h18l7.500 8.500v24.500H1z" />
              <path d="M19 .5V9h7.500" />
            </svg>
          </Slot>
          <Slot>
            <svg width="33" height="40" viewBox="0 0 33 40">
              <path d="M17 11h15v18H17z" fill="#fff" stroke="#0a72c7" strokeWidth="1.500" />
              <path d="M17.500 16l5 6 9.500-10" fill="none" stroke="#0a72c7" strokeWidth="2.400" />
              <path d="M0 7.500L19.500 4v32L0 32.500z" fill="#0a72c7" />
              <ellipse cx="9.500" cy="20" rx="4" ry="5.200" fill="none" stroke="#fff" strokeWidth="2.800" />
            </svg>
          </Slot>
          <Slot>
            <svg width="36" height="34" viewBox="0 0 36 34">
              <rect x="10" y="1" width="24" height="14" fill="#0a62b5" />
              <path d="M10 5h12v8H10zM22 13h12v8H22z" fill="#28a0e8" />
              <path d="M22 5h12v8H22z" fill="#50d0ff" />
              <path d="M10 13h12v8H10z" fill="#0c6fc8" />
              <path d="M8 19l14 5 14-8v15q0 2-2 2H10q-2 0-2-2z" fill="#1389e0" />
              <path d="M20 25l16-9v15q0 1-.5 1.500z" fill="#3ab5f2" />
              <rect x="0" y="8" width="18" height="18" rx="1.500" fill="#0a6bc4" />
              <circle cx="9" cy="17" r="4" fill="none" stroke="#fff" strokeWidth="2.400" />
            </svg>
            <Indicator $width={9} $color="#777" />
          </Slot>
          <Slot $bg="#e8b0ab">
            <svg width="38" height="34" viewBox="0 0 38 34">
              <circle cx="31" cy="9" r="4" fill="#5059c9" />
              <circle cx="20" cy="6" r="5.500" fill="#7b83eb" />
              <path d="M27 13h10v12q0 6-7 6h-4z" fill="#5059c9" />
              <path d="M12 13h17v11q0 10-9 10t-8-10z" fill="#7b83eb" />
              <rect x="0" y="8" width="18" height="18" rx="1.500" fill="#464eb8" />
              <path d="M4.500 12.800h9M9 12.500v9.500" stroke="#fff" strokeWidth="2.200" />
            </svg>
            <Badge><Txt $s={17} $c="#fff">1</Txt></Badge>
            <Indicator $width={48} $color="#c42b1c" />
          </Slot>
          <Slot $bg="#efefef">
            <svg width="36" height="36" viewBox="0 0 36 36">
              <circle cx="18" cy="18" r="18" fill="#fcc015" />
              <path d="M18 9h15.600A18 18 0 0 0 2.400 9l7.800 13.500z" fill="#ea3a2d" />
              <path d="M2.400 9A18 18 0 0 0 18 36l7.800-13.500L18 18l-7.800 4.500z" fill="#259b47" />
              <circle cx="18" cy="18" r="9" fill="#fff" />
              <circle cx="18" cy="18" r="7.200" fill="#3b7cf0" />
            </svg>
            <Indicator $width={24} $color="#0a78d4" />
          </Slot>
          <Slot>
            <svg width="28" height="37" viewBox="0 0 28 37">
              <rect x="0" y="3" width="28" height="29" rx="2" fill="#52bcd8" />
              <path d="M0 31h28v3H0z" fill="#f2f2f2" />
              <path d="M0 33.500h28V35q0 2-2 2H2q-2 0-2-2z" fill="#b4591a" />
              <path d="M5 11.500h18M5 17.500h18M5 23.500h18" stroke="#0b6a8e" strokeWidth="2.200" />
              <path d="M4.500 0v5M11 0v5M17.500 0v5M24 0v5" stroke="#0b6a8e" strokeWidth="3" />
            </svg>
            <Indicator $width={9} $color="#777" />
          </Slot>

          <Tray>
            <TrayItem $mr={27}><Chevron up size={17} color="#1b1b1b" sw={1.6} /></TrayItem>
            <TrayItem $mr={28}>
              <svg width="25" height="22" viewBox="0 0 25 22">
                <path d="M6 19a5 5 0 0 1-.8-9.900A7 7 0 0 1 18.500 7.500 5.800 5.800 0 0 1 19 19z" fill="#e9e9e9" stroke="#1b1b1b" strokeWidth="1.700" />
                <path d="M2 14a4.500 4.500 0 0 1 4-4.500A6.500 6.500 0 0 1 18 8l-7 5-4 5z" fill="#8f8f8f" />
                <path d="M4 2l18.500 18.500" stroke="#1b1b1b" strokeWidth="1.700" />
              </svg>
            </TrayItem>
            <TrayItem $mr={28}><Txt $s={18} $c="#1b1b1b">ENG</Txt></TrayItem>
            <TrayItem $mr={11}>
              <svg width="25" height="18" viewBox="0 0 25 18" fill="none" stroke="#1b1b1b" strokeWidth="1.700">
                <path d="M1 7a16.500 16.500 0 0 1 23 0M4.500 10.500a11.500 11.500 0 0 1 16 0M8 13.500a6.500 6.500 0 0 1 9 0" />
                <circle cx="12.500" cy="15.500" r="1.600" fill="#1b1b1b" stroke="none" />
              </svg>
            </TrayItem>
            <TrayItem $mr={13}>
              <svg width="24" height="18" viewBox="0 0 24 18" fill="none" stroke="#1b1b1b" strokeWidth="1.600">
                <path d="M1 5.800h4L10 1.200v15.600L5 12.200H1zM14.500 5l8 8M22.500 5l-8 8" />
              </svg>
            </TrayItem>
            <TrayItem $mr={14}>
              <svg width="25" height="16" viewBox="0 0 25 16" fill="none" stroke="#1b1b1b" strokeWidth="1.800">
                <rect x="1" y="1" width="20" height="14" rx="3" />
                <path d="M22.800 5v6" strokeWidth="2.600" />
                <path d="M4 4h4v8H4z" fill="#1b1b1b" stroke="none" />
              </svg>
            </TrayItem>
            <Clock>
              <Txt $s={18} $ls={0.01} $c="#1b1b1b">3:03 PM</Txt>
              <Txt $s={18} $ls={0.01} $c="#1b1b1b">8/1/2025</Txt>
            </Clock>
          </Tray>
        </Taskbar>
      </Screen>
    </>
  );
}
